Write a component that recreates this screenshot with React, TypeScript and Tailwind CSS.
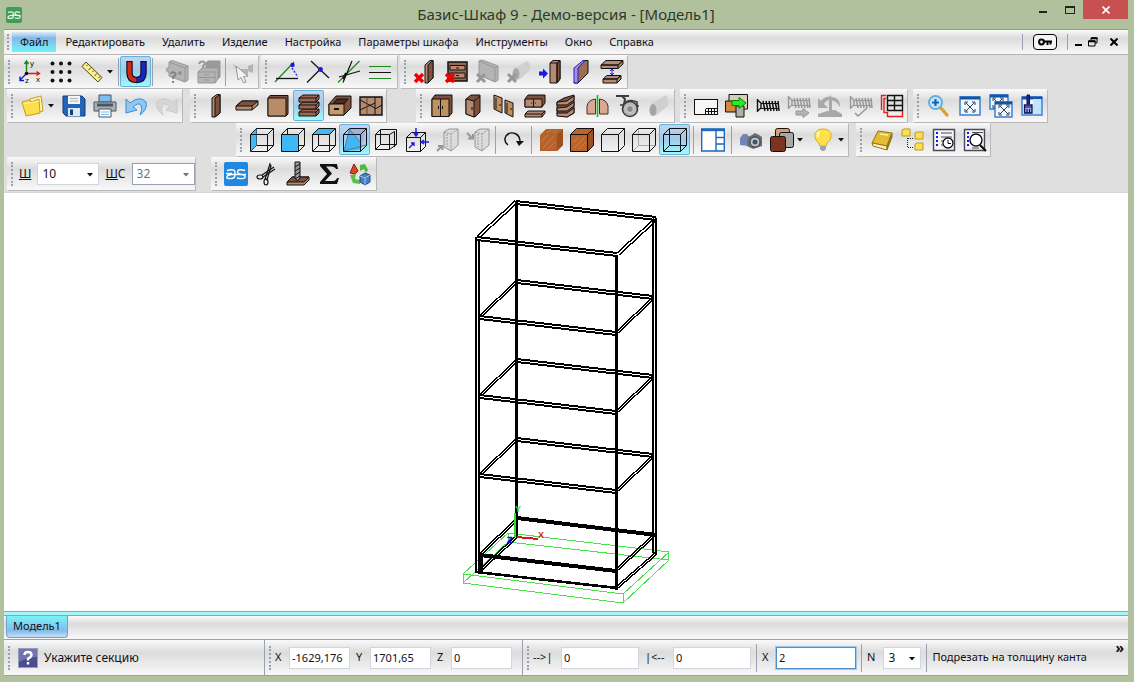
import React from 'react';

const INK = '#111111';
const WOOD = '#b58a70';
const WOOD_DARK = '#80503f';
const GREY = '#b4b4b4';
const GREY_DARK = '#979797';
const SKY = '#3fb8f5';

// wire cube shared by the view buttons
const Cube: React.FC<{ back?: string; children?: React.ReactNode }> = ({ back = INK, children }) => (
  <g fill="none" stroke={INK} strokeWidth="1">
    <path d="M6.5 .5V17.5H23.5M6.5 17.5L1 23" stroke={back} />
    <g stroke="none">{children}</g>
    <path d="M.5 6.5H17.5V23.5H.5ZM.5 6.5L6.5 .5H23.5V17.5L17.5 23.5M17.5 6.5L23.5 .5" />
  </g>
);

const RedCross = () => (
  <path d="M1 14L9 22M9 14L1 22" stroke="#f00000" strokeWidth="3.4" fill="none" />
);

const GreyCross = () => (
  <path d="M1 14L9 22M9 14L1 22" stroke={GREY_DARK} strokeWidth="3" fill="none" />
);

const Screw: React.FC<{ color: string }> = ({ color }) => (
  <g stroke={color} fill="none">
    <path d="M1.5 5V18M1.5 6L5 9V14L1.5 17" strokeWidth="1.4" />
    <path d="M5 9.5H23M5 14.5H23" strokeWidth="1" />
    <path d="M7 7L9 17M10 7L12 17M13 7L15 17M16 7L18 17M19 7L21 17M22 7L23 17" strokeWidth="1.5" />
  </g>
);

const WindowFrame: React.FC<{ x: number; y: number; w: number; h: number }> = ({ x, y, w, h }) => (
  <g>
    <rect x={x} y={y} width={w} height={h} fill="#eef6ff" stroke="#2f78cc" strokeWidth="1.4" />
    <path d={`M${x} ${y + 1}H${x + w}`} stroke="#1254a8" strokeWidth="3" />
  </g>
);

const Expand: React.FC<{ x: number; y: number }> = ({ x, y }) => (
  <path
    transform={`translate(${x} ${y})`}
    d="M1 1L9 9M9 1L1 9M0 3V0H3M7 0H10V3M10 7V10H7M3 10H0V7"
    fill="none"
    stroke="#33404e"
    strokeWidth="1"
  />
);

const icons: Record<string, React.ReactNode> = {
  axes: (
    <g fill="none" strokeWidth="1.4">
      <path d="M8.5 13V2M6.5 4L8.5 1L10.5 4" stroke="#138a13" />
      <path d="M9 13.5H21M18.5 11.5L21.5 13.5L18.5 15.5" stroke="#e01818" />
      <path d="M8 14L2 20M2 16.5V20.5H6" stroke="#1818c8" />
      <circle cx="8.5" cy="13.5" r="1.8" fill={INK} />
      <g fill={INK} fontSize="8" fontFamily="Liberation Sans, sans-serif">
        <text x="12" y="6">y</text>
        <text x="18" y="22">x</text>
        <text x="7" y="23">z</text>
      </g>
    </g>
  ),
  grid: (
    <g fill={INK}>
      {[3.5, 12, 20.5].map((y) =>
        [3.5, 12, 20.5].map((x) => <circle key={`${x}-${y}`} cx={x} cy={y} r="2" />)
      )}
    </g>
  ),
  ruler: (
    <g stroke="#4c4818" strokeWidth="1">
      <path d="M2 6.5L6 2L22 17.5L18 22Z" fill="#f7f08c" />
      <path d="M8 4.5L6.5 6M11 7.5L8.5 10M14 10.5L12.5 12M17 13.5L14.5 16M20 16.5L18.5 18" />
    </g>
  ),
  magnet: (
    <g fill="none">
      <path d="M5.5 1V13Q5.5 20 12.5 20Q19.5 20 19.5 13V1" stroke={INK} strokeWidth="6.4" />
      <path d="M5.5 2V13Q5.5 20 12.5 20" stroke="#d02a20" strokeWidth="4" />
      <path d="M19.5 2V13Q19.5 20 12.5 20" stroke="#1a25c8" strokeWidth="4" />
    </g>
  ),
  puzzle: (
    <g stroke={GREY_DARK} fill={GREY}>
      <path d="M3 2L6 .5L22 6V20L19 22L3 16V12Q-1 12 1 8L3 8Z" />
      <path d="M3 2L19 8V22M19 8L22 6" fill="none" />
      <circle cx="14" cy="13" r="1.5" fill="#8a8a8a" />
      <path d="M5 14Q6 11 9 13Q11 15 7 17V19M7 21V23" fill="none" stroke="#858585" strokeWidth="2" />
    </g>
  ),
  drawersHelp: (
    <g stroke={GREY_DARK} fill={GREY}>
      <path d="M9 3L11 1H23V17L18 21V8H9Z" fill="#9a9a9a" />
      <path d="M1 12L5 8H21V19L18 23H1Z" />
      <path d="M1 12H18V23M1 17.5H18M7 15H12M7 20H12" fill="none" />
      <path d="M2 4Q3 1 6 1.5Q10 3 6 6V8" fill="none" strokeWidth="2" />
    </g>
  ),
  pick: (
    <g stroke={GREY_DARK} fill={GREY}>
      <path d="M1 3L8 9H17V6L22 4V13L17 11V15H10L5 12V9Z" stroke="none" />
      <path d="M5 6L17 16L12.5 16.5L15 22L12.5 23L10 17.5L7 20Z" fill="#f2f2f2" />
    </g>
  ),
  snapAngle: (
    <g fill="none" strokeWidth="1.3">
      <path d="M0 22L19 2" stroke="#1b8c1b" />
      <path d="M1 18.5H23" stroke={INK} />
      <path d="M17 8L23 17" stroke="#1a1ae0" strokeDasharray="2 1.5" />
      <circle cx="17.5" cy="5" r="2.2" fill="#1a1ae0" stroke="none" />
    </g>
  ),
  snapCross: (
    <g fill="none" stroke={INK} strokeWidth="1.2">
      <path d="M1 22.5L14 9.5M5 1L23 18" />
      <circle cx="14.5" cy="9.5" r="2.4" fill="#1a1ae0" stroke="none" />
    </g>
  ),
  snapStar: (
    <g fill="none" strokeWidth="1.2">
      <path d="M1 22.5L22.5 1" stroke="#1b8c1b" />
      <path d="M15 1L6 22.5M2 17L23 11" stroke={INK} />
      <path d="M9 13L6 19" stroke={INK} strokeWidth="2" />
    </g>
  ),
  parallels: (
    <g strokeWidth="1" shapeRendering="crispEdges">
      <path d="M1 6.5H23M1 18.5H23" stroke="#1b8c1b" />
      <path d="M1 12.5H23" stroke={INK} />
    </g>
  ),
  delPanel: (
    <g stroke={INK} fill={WOOD}>
      <path d="M11 5L16 .5H19V18L14 23H11Z" />
      <path d="M14 5L19 .5V18L14 23Z" fill={WOOD_DARK} />
      <RedCross />
    </g>
  ),
  delDrawer: (
    <g stroke={INK} fill="#9c6650">
      <path d="M3 2H22V21H3Z" strokeWidth="1.5" />
      <path d="M5 5.5H20V10H5ZM5 13H20V18H5Z" fill={WOOD} />
      <path d="M11 8H14M11 15.5H14" />
      <RedCross />
    </g>
  ),
  delDoor: (
    <g stroke={GREY_DARK} fill={GREY}>
      <path d="M3 1L6 0L22 6V20L19 22L3 15Z" />
      <path d="M3 1L19 8V22M19 8L22 6" fill="none" />
      <GreyCross />
    </g>
  ),
  delTube: (
    <g fill="#d0d0d0">
      <path d="M7 9L20 1Q24 4 23 10L12 20Z" />
      <ellipse cx="9" cy="14" rx="3.5" ry="6" fill="#a9a9a9" />
      <GreyCross />
    </g>
  ),
  movePanel: (
    <g stroke={INK} fill={WOOD}>
      <path d="M12 3L15 .5H22V19L19 23H12Z" />
      <path d="M19 3L22 .5V19L19 23Z" fill={WOOD_DARK} />
      <path d="M12 3H19V23" fill="none" />
      <path d="M1 11.5H5V8.5L10 13.5L5 18.5V15.5H1Z" fill="#1a1ae0" stroke="none" />
    </g>
  ),
  facePanel: (
    <g stroke={INK} fill="#a06a55">
      <path d="M9 8L15 .5H19V13L9 23H5Z" />
      <path d="M5 8L14 .5H16L9 8V23H5Z" fill="#a48fe8" stroke="#2020c0" />
    </g>
  ),
  gap: (
    <g stroke={INK} fill={WOOD}>
      <path d="M1 5L6 .5H23L18 5ZM1 5H18V8.5H1ZM18 5L23 .5V4L18 8.5" />
      <path d="M3 19L7 15.5H21L17 19ZM3 19H17V23H3ZM17 19L21 15.5V19L17 23" />
      <path d="M12 9V15M10 11L12 9L14 11M10 13L12 15L14 13" stroke="#1a1ae0" fill="none" />
    </g>
  ),
  open: (
    <g stroke="#c99a1c">
      <path d="M9 5L20 2L22 17L11 20Z" fill="#fff6b8" />
      <path d="M1 8L8 6L10 8L18 5L19 19L5 22Z" fill="#fbe04c" />
      <path d="M2 10L18 7" stroke="#fff3a0" />
    </g>
  ),
  save: (
    <g>
      <path d="M1 2H20L23 5V22H4L1 19Z" fill="#2265b8" stroke="#123f80" />
      <path d="M6 2H18V10H6Z" fill="#f4f4f4" />
      <path d="M8 4.5H16M8 7H16" stroke="#b0b0b0" />
      <path d="M6 14H18V22H6Z" fill="#dbe8f6" />
      <path d="M8 15.5H11V21H8Z" fill="#123f80" />
    </g>
  ),
  print: (
    <g stroke="#4c5560">
      <path d="M6 1H18V8H6Z" fill="#7dbdf0" />
      <path d="M1 8H23V17H1Z" fill="#a8b0b8" />
      <path d="M4 11H20" strokeWidth="3" />
      <path d="M6 15H18V23H6Z" fill="#f8fbff" />
      <path d="M8 18H16M8 20.5H16" stroke="#7dbdf0" />
    </g>
  ),
  undo: (
    <path
      d="M2 5V19L13 16L9 13Q14 8 17 11Q19 15 16 21Q24 15 22 8Q16 1 6 9Z"
      fill="#8cc8f4"
      stroke="#3c8cd0"
    />
  ),
  redo: (
    <path
      d="M22 5V19L11 16L15 13Q10 8 7 11Q5 15 8 21Q0 15 2 8Q8 1 18 9Z"
      fill="#d6d6d6"
      stroke="#cacaca"
    />
  ),
  panelV: (
    <g stroke={INK} fill={WOOD}>
      <path d="M8 4L13 .5H16V19L11 23H8Z" />
      <path d="M11 4L16 .5V19L11 23Z" fill={WOOD_DARK} />
    </g>
  ),
  panelH: (
    <g stroke={INK} fill={WOOD}>
      <path d="M1 12L7 7H23V11L17 16H1Z" />
      <path d="M1 12L7 7H23L17 12Z" fill={WOOD_DARK} />
      <path d="M17 12V16" />
    </g>
  ),
  panelF: (
    <g stroke={INK} fill="#b98c68">
      <path d="M2 4L4 1.5H22V20L20 22H2Z" fill={WOOD_DARK} />
      <path d="M2 4H20V22H2Z" />
    </g>
  ),
  shelves: (
    <g stroke={INK} fill="#9a6650">
      {[15, 8, 1].map((y) => (
        <path key={y} d={`M2 ${y + 3}L6 ${y}H22V${y + 4}L19 ${y + 7}H2Z`} />
      ))}
      {[1, 8, 15].map((y) => (
        <path key={y} d={`M2 ${y + 3}H19L22 ${y}M19 ${y + 3}V${y + 7}`} fill="none" />
      ))}
    </g>
  ),
  drawer: (
    <g stroke={INK}>
      <path d="M1 10L8 2H23V14L16 21H1Z" fill={WOOD_DARK} />
      <path d="M5 10L9 5H20L16 10Z" fill="#4c2c20" />
      <path d="M1 10H16V21H1Z" fill="#c59a6c" />
      <path d="M6 15H11" strokeWidth="2" />
    </g>
  ),
  layout: (
    <g stroke={INK} fill={WOOD}>
      <path d="M1 3H23V21H1Z" strokeWidth="1.4" />
      <path d="M16 3V21M1 6L16 14M16 15L23 11M1 16L16 9" fill="none" />
      <path d="M8 4V20" stroke="#6a4434" fill="none" />
    </g>
  ),
  cabinet: (
    <g stroke={INK} fill="#c0915e">
      <path d="M2 5L5 1H22V19L19 22.5H2Z" fill={WOOD_DARK} />
      <path d="M2 5H19V22.5H2Z" />
      <path d="M10.5 5V22M8.5 12V15M12.5 12V15" />
    </g>
  ),
  door: (
    <g stroke={INK} fill={WOOD}>
      <path d="M5 5L10 1H19V18L14 23L5 20Z" fill={WOOD_DARK} />
      <path d="M5 5L13 7V23L5 20Z" />
      <path d="M13 7L19 2M11 13V16" />
    </g>
  ),
  doors: (
    <g stroke={INK} fill="#c0915e">
      <path d="M2 1L10 4V19L2 15Z" />
      <path d="M13 6L21 9V23L13 19Z" />
      <path d="M4 4L4 15M15 9V19M8 10V12M19 14V16" fill="none" />
    </g>
  ),
  cabinets: (
    <g stroke={INK} fill={WOOD}>
      <path d="M2 5L5 1H22V9L19 13H2Z" fill={WOOD_DARK} />
      <path d="M2 5H19V13H2ZM10.5 5V13M8 9H9M12 9H13" />
      <path d="M2 20L5 17H22V19L19 23H2ZM2 20H19V23M19 20L22 17" />
    </g>
  ),
  shelvesOpen: (
    <g stroke={INK} fill={WOOD}>
      <path d="M3 8L10 4L20 1V19L13 23L3 20Z" fill={WOOD_DARK} />
      <path d="M3 8L13 7L20 2V6L13 11L3 11ZM3 14L13 13L20 8V12L13 17L3 17ZM3 19L13 19L20 14V19L13 23L3 22Z" />
    </g>
  ),
  mirror: (
    <g stroke="#4a3026" fill="#d8a890">
      <path d="M10.5 5V20H2V12Q3 6 10.5 5Z" />
      <path d="M14.5 5V20H23V12Q22 6 14.5 5Z" />
      <path d="M12.5 1V23" stroke="#12c012" strokeWidth="1.6" />
    </g>
  ),
  wheel: (
    <g stroke="#3c3c3c" fill="none">
      <path d="M0 2H13M6 2L9 5L8 11" strokeWidth="2" />
      <circle cx="14" cy="15" r="7.5" fill="#b8b8b8" strokeWidth="1.6" />
      <circle cx="14" cy="15" r="3.5" fill="#8a8a8a" stroke="#d8d8d8" />
      <path d="M4 11H7Q12 4 21 8V12H23" strokeWidth="1.6" />
    </g>
  ),
  tube: (
    <g fill="#d0d0d0">
      <path d="M4 10L19 1Q22 5 21 12L8 22Z" />
      <ellipse cx="6" cy="16" rx="3.5" ry="6" fill="#a4a4a4" />
    </g>
  ),
  table: (
    <g fill="none" stroke={INK} shapeRendering="crispEdges">
      <path d="M.5 5.5H23.5V20.5H.5Z" fill="#f6f6f6" />
      <path d="M11.5 14.5H23.5M11.5 17.5H23.5M11.5 14.5V20.5M14.5 14.5V20.5M17.5 14.5V20.5M20.5 14.5V20.5" />
    </g>
  ),
  replace: (
    <g stroke={INK}>
      <path d="M4 .5H22.5V15H4Z" fill="#d4d0bc" />
      <path d="M.5 7H12V18H.5Z" fill="#d4863c" />
      <path d="M11 12H19V23H11Z" fill="#b4b0a4" />
      <path d="M7 6.5H14V3.5L21 9L14 14.5V11.5H7Z" fill="#22ee22" stroke="#0a800a" />
    </g>
  ),
  screw: <Screw color={INK} />,
  screwMove: (
    <g>
      <g transform="translate(0 -3)"><Screw color={GREY_DARK} /></g>
      <path d="M9 17H16V14.5L22 19L16 23.5V21H9Z" fill={GREY} stroke={GREY_DARK} />
    </g>
  ),
  screwTurn: (
    <g fill="#a8a8a8">
      <path d="M12 1L14 4V16H17L24 20V23H0V20L9 17H11V4Z" />
      <path d="M0 4V14H10L6 10Q8 6 12 6Q18 6 22 13Q22 3 13 3Q7 2 3 7Z" />
    </g>
  ),
  screwOk: (
    <g>
      <g transform="translate(0 -3)"><Screw color={GREY_DARK} /></g>
      <path d="M6 19L9 22L18 14" fill="none" stroke={GREY_DARK} strokeWidth="1.5" />
    </g>
  ),
  cutting: (
    <g fill="none">
      <path d="M7.5 1.5H22.5V16.5H7.5ZM7.5 6.5H22.5M7.5 11.5H22.5M14.5 1.5V16.5" stroke={INK} strokeWidth="1.4" />
      <path d="M6 1.5H1.5V16M6 4.5H4V18.5H7M7.5 18V22.5H22.5V17" stroke="#e02020" strokeWidth="1.4" />
    </g>
  ),
  zoomIn: (
    <g>
      <path d="M13 13L20 21" stroke="#d8a030" strokeWidth="3.4" strokeLinecap="round" />
      <circle cx="8.5" cy="8.5" r="6.5" fill="#c4e8fb" stroke="#6cacd4" strokeWidth="2" />
      <path d="M8.5 5V12M5 8.5H12" stroke="#1266b4" strokeWidth="2.2" />
    </g>
  ),
  fit: (
    <g>
      <WindowFrame x={2} y={3} w={20} h={18} />
      <Expand x={7} y={8} />
    </g>
  ),
  fitAll: (
    <g>
      <WindowFrame x={1} y={1} w={18} h={14} />
      <Expand x={4} y={4} />
      <WindowFrame x={6} y={8} w={17} h={15} />
      <Expand x={10} y={11} />
    </g>
  ),
  redraw: (
    <g>
      <WindowFrame x={2} y={3} w={20} h={18} />
      <path d="M13 5H21V20H13Z" fill="#c4e4fc" />
      <path d="M7 1H9.5V10H7Z" fill="#2a2a90" stroke="#101050" />
      <path d="M4.5 11H12V19H4.5Z" fill="#90a8e0" stroke="#101050" strokeWidth="1.3" />
      <path d="M4 13H12M7 15V19M9.5 15V19" stroke="#101050" />
    </g>
  ),
  cubeLeft: <Cube><path d="M1 6.5L6.5 1V17.5L1 23Z" fill={SKY} /></Cube>,
  cubeFront: <Cube><path d="M1 7H17V23H1Z" fill={SKY} /></Cube>,
  cubeTop: <Cube><path d="M1 6.5L7 .6H23.4L17.5 6.5Z" fill={SKY} /></Cube>,
  cubeIso: (
    <Cube back="#7f93b4">
      <path d="M6.5 1L23 1L18 22Z" fill="#9cb4e4" />
      <path d="M6.5 1L17 14V22L1 23Z" fill={SKY} />
      <path d="M6.5 1L17 14M6.5 1L1 23M1 23L23 17" stroke="#5478a8" />
    </Cube>
  ),
  cubeBack: (
    <g fill="none" stroke={INK}>
      <path d="M1.5 6.5H15.5V21.5H1.5ZM6.5 1.5H22.5V16.5H6.5ZM1.5 6.5L6.5 1.5M15.5 21.5L22.5 16.5M1.5 21.5L6.5 16.5" />
      <path d="M15.5 6.5L20.5 3.5V19" />
    </g>
  ),
  cubeFit: (
    <g fill="none" stroke={INK}>
      <path d="M1.5 9.5H15.5V23.5H1.5ZM1.5 9.5L6.5 4.5H20.5L15.5 9.5M20.5 4.5V18.5L15.5 23.5" />
      <g stroke="#1a1ae0" strokeWidth="1.4">
        <path d="M11 0V7M9 5L11 8L13 5M24 14H17M19 12L16 14L19 16M4 20L9 15M6 15H9V18" />
      </g>
    </g>
  ),
  cubeGreyA: (
    <g fill="#dcdcdc" stroke={GREY_DARK}>
      <path d="M8 4L13 1H22V17L15 23L8 19Z" />
      <path d="M8 4L15 6V23M15 6L22 1M11 6V19" fill="none" strokeDasharray="2 1" />
      <path d="M1 23L6 18M2 18H6.5V22" strokeWidth="2" fill="none" />
    </g>
  ),
  cubeGreyB: (
    <g fill="#dcdcdc" stroke={GREY_DARK}>
      <path d="M8 4L13 1H22V17L15 23L8 19Z" />
      <path d="M8 4L15 6V23M15 6L22 1M11 6V19" fill="none" strokeDasharray="2 1" />
      <path d="M0 5L5 10M6 6V10.5H1" strokeWidth="2" fill="none" />
    </g>
  ),
  rotate: (
    <g>
      <path d="M7 17Q2 13 5 8Q9 3 15 6Q19 8 19 14" fill="none" stroke={INK} strokeWidth="1.4" />
      <path d="M15 13H23L18 18Z" fill={INK} />
    </g>
  ),
  solidPlain: (
    <g>
      <path d="M1 7L7 1H24V17L18 23H1Z" fill="#b5622c" />
      <path d="M18 7L24 1V17L18 23Z" fill="#9c5020" />
      <path d="M2 14L9 7M4 20L15 8M9 21L16 14M8 5L12 2M14 5L18 2" stroke="#d08048" />
    </g>
  ),
  solidEdges: (
    <g stroke={INK}>
      <path d="M.5 6.5L6.5 .5H23.5V17.5L17.5 23.5H.5Z" fill="#bb652c" />
      <path d="M17.5 6.5L23.5 .5V17.5L17.5 23.5Z" fill="#9c5020" />
      <path d="M.5 6.5H18" />
      <path d="M3 14L9 9M4 20L15 9M9 21L16 14" stroke="#d08048" />
    </g>
  ),
  cubeHidden: <Cube back="none" />,
  cubeGhost: <Cube back="#a8a8a8" />,
  cubeWire: <Cube />,
  panes: (
    <g fill="#fff" stroke="#1d6ab8" strokeWidth="1.4">
      <path d="M.7 1H23.3V23H.7Z" />
      <path d="M.7 2H23.3" strokeWidth="2.4" />
      <path d="M15 3V23M15 9.5H23M15 16H23" />
    </g>
  ),
  camera: (
    <g>
      <path d="M1 10L4 6H8L10 9V18L1 17Z" fill="#7484b4" />
      <path d="M9 9L13 7L16 5L20 7L23 9V18L14 21L8 18Z" fill="#686c74" />
      <circle cx="16" cy="14" r="5" fill="#c0c8d0" stroke="#34383e" />
      <circle cx="16" cy="14" r="2.5" fill="#485464" />
    </g>
  ),
  materials: (
    <g stroke={INK}>
      <rect x="5.5" y=".5" width="14" height="14" rx="2" fill="#dc9c70" />
      <rect x="9.5" y="4.5" width="14" height="15" rx="2" fill="#a8a8a8" />
      <rect x=".5" y="8.5" width="15" height="15" rx="2" fill="#7c3420" />
    </g>
  ),
  bulb: (
    <g>
      <path d="M12 1C2 1 2 11 8 15L9 18H15L16 15C22 11 22 1 12 1Z" fill="#fde24a" stroke="#d8a820" />
      <path d="M8 4Q6 6 7 9" stroke="#fffbd0" strokeWidth="2" fill="none" />
      <path d="M9 18H15V21L13 23H11L9 21Z" fill="#a0a4b0" />
    </g>
  ),
  book: (
    <g stroke="#96701a">
      <path d="M2 15L8 3L22 5L17 18Z" fill="#e4bc34" />
      <path d="M2 15L17 18V22L3 18Z" fill="#fff4c8" />
      <path d="M17 18L22 5V9L17 22Z" fill="#5a9a38" />
      <path d="M10 6L18 7" stroke="#fff0a0" strokeWidth="1.5" />
    </g>
  ),
  tree: (
    <g fill="#fbe050" stroke="#c09820">
      <path d="M1 2L3 1H9V8H1ZM14 5L16 4H22V11H14ZM14 16L16 15H22V22H14Z" />
      <path d="M6.5 10V19.5H13M7 10.5H13" fill="none" stroke="#202020" strokeDasharray="1 1" />
    </g>
  ),
  listClock: (
    <g fill="none" stroke="#484c58">
      <path d="M1.5 1.5H22.5V22.5H1.5Z" fill="#f4f4f4" strokeWidth="1.4" />
      <path d="M9 5H20M9 9H20M9 13H12M9 17H11" />
      <path d="M4 5H6M4 9H6M4 13H6M4 17H6" stroke="#1a1ae0" strokeWidth="2" />
      <circle cx="16" cy="15" r="5" fill="#fff" stroke={INK} strokeWidth="1.3" />
      <path d="M16 12V15.5H19" stroke={INK} />
    </g>
  ),
  listFind: (
    <g fill="none" stroke="#484c58">
      <path d="M1.5 1.5H21.5V22.5H1.5Z" fill="#f4f4f4" strokeWidth="1.4" />
      <path d="M9 4.5H20M9 20H16" />
      <path d="M4 5H6M4 9H6M4 13H6M4 17H6" stroke="#1a1ae0" strokeWidth="2" />
      <circle cx="13" cy="12" r="6" fill="#fff" stroke={INK} strokeWidth="1.4" />
      <path d="M17 17L23 23" stroke={INK} strokeWidth="2.2" />
    </g>
  ),
  brand: (
    <g>
      <rect width="24" height="24" rx="2" fill="#2088e0" />
      <path
        d="M3 8.5Q10 6.5 11 9.5V13Q11 16.5 7 16.5H5Q2 16.5 3 14.5Q4 12.5 8 12.5H22M21 8.5Q14 6.5 13.5 9.5Q13.5 12 18 12.5Q22 13.5 21 15.5Q19 17.5 13 16M2 11.5H8"
        fill="none"
        stroke="#fff"
        strokeWidth="1.4"
      />
    </g>
  ),
  scissors: (
    <g fill="none" stroke={INK} strokeWidth="1.2">
      <path d="M15 2L10 17L12 18L16 4Z" fill="#d8d8d8" />
      <path d="M19 5L7 13M20 7L8 15" />
      <ellipse cx="5" cy="15" rx="3" ry="2" />
      <ellipse cx="11" cy="20" rx="2" ry="3" />
    </g>
  ),
  drill: (
    <g stroke={INK}>
      <path d="M1 20L6 15H23V18L18 23H1Z" fill={WOOD} />
      <path d="M1 20L6 15H23L18 20Z" fill={WOOD_DARK} />
      <path d="M9 0H14V16L11.5 19L9 16Z" fill="#9a9a9a" />
      <path d="M9 5L14 2M9 9L14 6M9 13L14 10M9 17L14 14" />
    </g>
  ),
  sum: <path d="M3 2H20L21 7H19Q18 4.5 14 4.5H9L15 11.5L8 19H16Q19 19 20 16H22L20 22H3V20L10 12L3 4Z" fill={INK} />,
  export3d: (
    <g>
      <path d="M2 11L6 2L10 9L7 12Z" fill="#e04420" stroke="#802010" />
      <path d="M12 3L17 2L20 8L18 11L16 7L12 9Z" fill="#50b840" />
      <path d="M2 13L8 12L7 17L12 18V22L5 21Z" fill="#58c048" />
      <path d="M12 14L17 11L22 13V20L17 23L12 20Z" fill="#4880c4" stroke="#204880" />
      <path d="M12 14L17 16L22 13M17 16V23" stroke="#9cc4f0" fill="none" />
    </g>
  ),
};

const Icon: React.FC<{ name: string }> = ({ name }) => (
  <svg width="24" height="24" viewBox="0 0 24 24" className="shrink-0 overflow-visible" aria-hidden="true">
    {icons[name]}
  </svg>
);

const Arrow = () => (
  <svg width="6" height="4" viewBox="0 0 6 4" aria-hidden="true">
    <path d="M0 0H6L3 3.5Z" fill="currentColor" />
  </svg>
);

const Grip = () => <span className="mx-1 h-6 shrink-0 border-l-2 border-dotted border-gray-400" />;

const Divider: React.FC<{ className?: string }> = ({ className = 'mx-px' }) => (
  <span className={`h-7 w-px shrink-0 bg-gray-400 ${className}`} />
);

const barStyle = 'bg-linear-to-b from-[#fafafa] via-[#dcdcdc] via-35% to-[#f8f8f8]';

const Toolbar: React.FC<{ className?: string; children: React.ReactNode }> = ({ className = '', children }) => (
  <div
    role="toolbar"
    className={`flex h-[33px] shrink-0 items-center shadow-[1px_1px_0_#b8b8b8] ${barStyle} ${className}`}
  >
    <Grip />
    {children}
  </div>
);

// "|" is a divider, "||" a wider one, "name*" a pressed button, "name+" a button with a menu arrow
const Tools: React.FC<{ items: string }> = ({ items }) => (
  <>
    {items.split(' ').map((item, i) => {
      if (item === '|') return <Divider key={i} />;
      if (item === '||') return <Divider key={i} className="mx-[3px]" />;
      const name = item.replace(/[*+]/, '');
      const active = item.endsWith('*');
      return (
        <React.Fragment key={i}>
          <button
            aria-label={name}
            aria-pressed={active}
            className={`flex h-[31px] w-[31px] shrink-0 items-center justify-center ${
              active
                ? 'rounded-xs border border-[#62b2dd] bg-linear-to-b from-[#c3d3ee] via-[#9fcbea] to-[#a0fafb]'
                : ''
            }`}
          >
            <Icon name={name} />
          </button>
          {item.endsWith('+') && (
            <button aria-label={`${name} menu`} className="flex h-[31px] w-[10px] items-center">
              <Arrow />
            </button>
          )}
        </React.Fragment>
      );
    })}
  </>
);

const Combo: React.FC<{ id: string; value: string; className: string; disabled?: boolean }> = ({
  id,
  value,
  className,
  disabled,
}) => (
  <span className={`relative ${disabled ? 'text-gray-500' : ''}`}>
    <select
      id={id}
      disabled={disabled}
      defaultValue={value}
      className={`h-[22px] appearance-none border bg-white pl-1 text-xs ${
        disabled ? 'border-gray-400' : 'border-gray-300'
      } ${className}`}
    >
      <option>{value}</option>
    </select>
    <span className="pointer-events-none absolute top-2.5 right-1.5">
      <Arrow />
    </span>
  </span>
);

const Field: React.FC<{ id: string; label: string; value: string; labelClass?: string; className?: string }> = ({
  id,
  label,
  value,
  labelClass = 'w-2',
  className = 'w-[61px] border-gray-300',
}) => (
  <div className="flex items-center gap-1.5">
    <label htmlFor={id} className={`whitespace-pre ${labelClass}`}>{label}</label>
    <input id={id} defaultValue={value} className={`h-[22px] border bg-white px-0.5 text-[11px] ${className}`} />
  </div>
);

const menu = [
  'Файл',
  'Редактировать',
  'Удалить',
  'Изделие',
  'Настройка',
  'Параметры шкафа',
  'Инструменты',
  'Окно',
  'Справка',
];

// a board edge: two close lines
const Edge: React.FC<{ x1: number; y1: number; x2: number; y2: number; dx?: number; dy?: number; w?: number }> = ({
  x1,
  y1,
  x2,
  y2,
  dx = 0,
  dy = 3,
  w = 2,
}) => (
  <path d={`M${x1} ${y1}L${x2} ${y2}M${x1 + dx} ${y1 + dy}L${x2 + dx} ${y2 + dy}`} strokeWidth={w} />
);

const Wardrobe = () => (
  <svg
    width="208"
    height="410"
    viewBox="462 197 208 410"
    shapeRendering="crispEdges"
    fill="none"
    role="img"
    aria-label="Модель1"
  >
    <g stroke="#4ce04c" strokeWidth="1">
      <path d="M463 574L508 533L669 552L623 594Z" />
      <path d="M463 583L508 542L669 560L623 603Z" />
      <path d="M463.5 574V583M508.5 533V542M668.5 552V560M623.5 594V603" />
    </g>
    <g stroke="#000">
      <path d="M476 237V573M479 239V573M653 220V553M656 218V555" strokeWidth="2" />
      <path d="M516 201V537M616.5 255V590" strokeWidth="3" />
      <Edge x1={516} y1={201} x2={656} y2={217} />
      <Edge x1={477} y1={237} x2={617} y2={253} />
      <Edge x1={477} y1={236} x2={515} y2={201} dx={2} dy={2} w={1.4} />
      <Edge x1={617} y1={253} x2={654} y2={219} dx={2} dy={2} w={1.4} />
      {[0, 79, 158].map((d) => (
        <g key={d}>
          <Edge x1={517} y1={280 + d} x2={653} y2={296 + d} />
          <Edge x1={480} y1={316 + d} x2={616} y2={332 + d} />
          <Edge x1={480} y1={315 + d} x2={515} y2={282 + d} dx={1} dy={2} w={1.4} />
          <Edge x1={617} y1={331 + d} x2={652} y2={298 + d} dx={1} dy={2} w={1.4} />
        </g>
      ))}
      <Edge x1={517} y1={517} x2={656} y2={534} dy={2} />
      <path d="M480 555L616 571" strokeWidth="4" />
      <Edge x1={480} y1={553} x2={516} y2={519} dx={1} dy={2} w={1.4} />
      <Edge x1={617} y1={568} x2={653} y2={535} dx={1} dy={2} w={1.4} />
      <path d="M476 572L617 588" strokeWidth="2.6" />
      <Edge x1={480} y1={569} x2={517} y2={535} dx={1} dy={2} w={1.4} />
      <Edge x1={617} y1={586} x2={655} y2={553} dx={1} dy={2} w={1.4} />
      <path d="M481 553V573" strokeWidth="3" />
    </g>
    <g strokeWidth="2">
      <path d="M515 513V537" stroke="#2ee02e" />
      <path d="M517 537L538 539" stroke="#d81818" />
    </g>
    <g fontSize="9" fontWeight="bold" fontFamily="Liberation Sans, sans-serif">
      <text x="515" y="512" fill="#2ee02e">Y</text>
      <text x="538" y="538" fill="#d81818">X</text>
      <text x="507" y="543" fill="#1010e0" stroke="#1010e0" strokeWidth=".5">Z</text>
    </g>
  </svg>
);

const App: React.FC = () => {
  return (
    <div className="flex min-h-screen flex-col bg-[#b1c19d] pr-1.5 pb-1.5 pl-1 font-['Noto_Sans',sans-serif] text-[11px] text-[#101018]">
      <header className="grid h-[29px] grid-cols-[1fr_auto_1fr] items-center">
        <svg width="16" height="16" viewBox="0 0 24 24" className="ml-0.5" aria-hidden="true">
          <rect width="24" height="24" rx="3" fill="#3f9d58" />
          <path
            d="M3 8Q10 6 11 9V13Q11 17 7 17H5Q2 17 3 15Q4 12.5 8 12.5H22M21 8Q14 6 13.5 9Q13.5 12 18 12.5Q22 13.5 21 16Q19 18 13 16.5"
            fill="none"
            stroke="#e8f6e8"
            strokeWidth="1.8"
          />
        </svg>
        <h1 className="text-[15px] text-[#30382c]">Базис-Шкаф 9 - Демо-версия - [Модель1]</h1>
        <div className="flex h-full items-start justify-end text-[#20241c]">
          <button aria-label="Свернуть" className="flex h-[19px] w-7 items-center justify-center pt-1">
            <span className="h-0.5 w-2 bg-current" />
          </button>
          <button aria-label="Развернуть" className="flex h-[19px] w-[26px] items-center justify-center">
            <span className="h-2 w-2.5 border border-t-2 border-current" />
          </button>
          <button aria-label="Закрыть" className="flex h-[19px] w-[45px] items-center justify-center bg-[#c75050] text-white">
            <svg width="8" height="8" viewBox="0 0 8 8" stroke="currentColor" strokeWidth="1.6">
              <path d="M.5 .5L7.5 7.5M7.5 .5L.5 7.5" />
            </svg>
          </button>
        </div>
      </header>

      <nav className={`flex h-[26px] items-center gap-px border-t border-b border-t-[#8e9c7e] border-b-[#b4b4b4] pr-2 ${barStyle}`}>
        <span className="w-[7px] pl-[3px]">
          <span className="block h-4 border-l-2 border-dotted border-gray-400" />
        </span>
        {menu.map((item, i) => (
          <button
            key={item}
            className={`h-5 px-2 whitespace-nowrap ${
              i === 0 ? 'bg-linear-to-b from-[#dcebf8] via-[#80b8e8] via-30% to-[#70f4fa]' : ''
            }`}
          >
            {item}
          </button>
        ))}
        <div className="ml-auto flex items-center text-black">
          <span className="h-4 w-px bg-gray-400" />
          <button aria-label="Ключ" className="mx-2.5 flex h-4 w-6 items-center justify-center rounded-sm border border-black bg-gray-100">
            <svg width="14" height="8" viewBox="0 0 14 8" fill="none" stroke="currentColor" strokeWidth="2">
              <circle cx="3.5" cy="4" r="2.4" />
              <path d="M6 3.5H14M9.5 4V7M12.5 4V6.5" />
            </svg>
          </button>
          <span className="h-4 w-px bg-gray-400" />
          <button aria-label="Свернуть окно" className="flex h-4 w-5 items-end justify-center pb-1">
            <span className="h-0.5 w-[7px] bg-black" />
          </button>
          <button aria-label="Восстановить окно" className="mr-3">
            <svg width="10" height="10" viewBox="0 0 10 10" fill="none" stroke="currentColor">
              <path d="M3 3V1H9V6H7M.5 4H7V9H.5Z" />
              <path d="M3 1.2H9.5M.5 4.2H7.5" strokeWidth="2" />
            </svg>
          </button>
          <button aria-label="Закрыть окно" className="mr-0.5">
            <svg width="8" height="8" viewBox="0 0 8 8" stroke="currentColor" strokeWidth="2">
              <path d="M.5 .5L7.5 7.5M7.5 .5L.5 7.5" />
            </svg>
          </button>
        </div>
      </nav>

      <section className="flex flex-col gap-px bg-[#dfdfdf] pb-0.5">
        <div className="flex gap-[3px]">
          <Toolbar>
            <Tools items="axes grid ruler+ | magnet* |" />
            <span className="w-2" />
            <Tools items="puzzle drawersHelp | pick" />
          </Toolbar>
          <Toolbar className="pr-0.5">
            <Tools items="snapAngle snapCross snapStar parallels" />
          </Toolbar>
          <Toolbar>
            <Tools items="delPanel delDrawer delDoor delTube movePanel facePanel gap" />
          </Toolbar>
        </div>
        <div className="flex gap-1.5 pl-[3px]">
          <Toolbar>
            <Tools items="open+ save print undo redo" />
          </Toolbar>
          <Toolbar className="ml-0.5">
            <Tools items="panelV panelH panelF shelves* drawer layout" />
          </Toolbar>
          <Toolbar className="ml-6">
            <Tools items="cabinet door doors cabinets shelvesOpen mirror wheel tube" />
          </Toolbar>
          <Toolbar>
            <Tools items="table replace screw screwMove screwTurn screwOk cutting" />
          </Toolbar>
          <Toolbar>
            <Tools items="zoomIn fit fitAll redraw" />
          </Toolbar>
        </div>
        <div className="flex gap-2 pl-[232px]">
          <Toolbar>
            <Tools items="cubeLeft cubeFront cubeTop cubeIso* cubeBack cubeFit cubeGreyA cubeGreyB | rotate || solidPlain solidEdges cubeHidden cubeGhost cubeWire* || panes || camera materials+ bulb+" />
          </Toolbar>
          <Toolbar>
            <Tools items="book tree listClock listFind" />
          </Toolbar>
        </div>
        <div className="flex gap-4 pl-[3px]">
          <Toolbar className="gap-1.5">
            <label htmlFor="step" className="-ml-1 text-xs underline">Ш</label>
            <Combo id="step" value="10" className="w-[62px]" />
            <label htmlFor="stepc" className="text-xs"><u>Ш</u>С</label>
            <Combo id="stepc" value="32" className="w-[63px]" disabled />
          </Toolbar>
          <Toolbar>
            <Tools items="brand scissors drill sum export3d" />
          </Toolbar>
        </div>
      </section>

      <main className="flex flex-1 justify-center border-t border-gray-300 bg-white pt-1">
        <Wardrobe />
      </main>

      <div className="h-[5px] border-t border-b border-[#6cb4bc] bg-[#a4f4f8]" />
      <div role="tablist" className={`flex h-6 items-start border-b border-gray-400 pl-0.5 ${barStyle}`}>
        <button
          role="tab"
          aria-selected="true"
          className="h-[22px] rounded-b-sm border border-t-0 border-[#6ca4d0] bg-linear-to-b from-[#78f4f8] via-[#84bce8] via-70% to-[#c8e0f4] px-1.5"
        >
          Модель1
        </button>
      </div>

      <footer className={`flex h-9 items-center border-b border-gray-400 whitespace-nowrap ${barStyle}`}>
        <div className="flex w-[260px] items-center">
          <Grip />
          <svg width="20" height="20" viewBox="0 0 20 20" className="mx-1" aria-hidden="true">
            <rect x=".5" y=".5" width="19" height="19" fill="#4c4c90" stroke="#9898c0" />
            <path d="M1 1H19V9Q10 9 1 14Z" fill="#7474ac" />
            <path d="M6.5 7Q6.5 4 10 4Q13.5 4 13.5 7Q13.5 9 10 10.5V12.5M10 14V16.5" fill="none" stroke="#fff" strokeWidth="2.4" />
          </svg>
          <p className="ml-0.5 text-xs">Укажите секцию</p>
        </div>
        <span className="h-9 w-px bg-gray-400" />
        <div className="flex w-[257px] items-center">
          <Grip />
          <div className="flex gap-1.5">
            <Field id="x" label="X" value="-1629,176" />
            <Field id="y" label="Y" value="1701,65" />
            <Field id="z" label="Z" value="0" />
          </div>
        </div>
        <span className="h-9 w-px bg-gray-400" />
        <div className="flex items-center pr-1">
          <Grip />
          <div className="flex gap-1.5">
            <Field id="before" label="--&gt;|" value="0" labelClass="w-[22px]" className="w-[78px] border-gray-300" />
            <Field id="after" label="|&lt;--" value="0" labelClass="w-[22px]" className="w-[78px] border-gray-300" />
          </div>
        </div>
        <Divider />
        <div className="px-1">
          <Field id="count" label="X" value="2" className="w-20 border-[#4a90d0] outline outline-[#9cc8ec]" />
        </div>
        <Divider />
        <div className="flex items-center gap-2 px-1">
          <label htmlFor="n">N</label>
          <Combo id="n" value="3" className="w-[38px]" />
        </div>
        <Divider />
        <button className="px-1">Подрезать на толщину канта</button>
        <button aria-label="Ещё" className="mr-1 ml-auto self-start text-sm leading-4 font-bold">»</button>
      </footer>
    </div>
  );
};

export default App;
